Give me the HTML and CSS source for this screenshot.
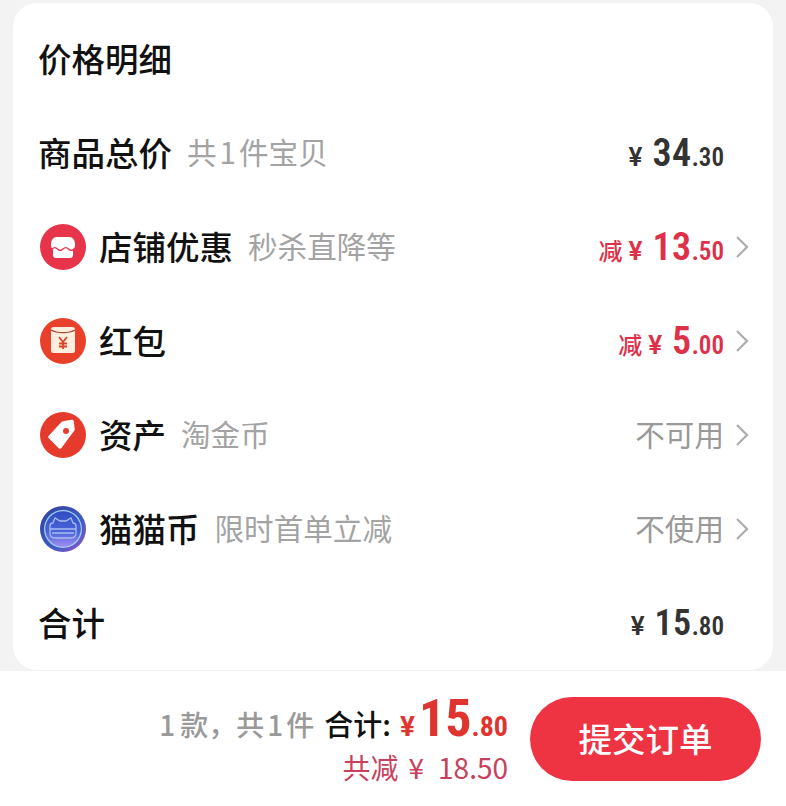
FILE: index.html
```html
<!DOCTYPE html>
<html lang="zh-CN">
<head>
    <meta charset="UTF-8">
    <meta name="viewport" content="width=device-width, initial-scale=1.0">
    <title>价格明细</title>
    <link rel="stylesheet" href="styles.css">
</head>
<body>
    <div class="card">
        <h1 class="title">价格明细</h1>

        <div class="row">
            <span class="name">商品总价</span>
            <span class="note">共<span class="one">1</span>件宝贝</span>
            <span class="amount"><span class="yen">¥</span><span class="big">34</span><span class="small">.30</span></span>
            <span class="arrow"></span>
        </div>

        <div class="row">
            <svg class="icon" viewBox="0 0 46 46">
                <circle cx="23" cy="23" r="23" fill="#e8344a"/>
                <path d="M11 21c0-5 2-8 6-8h12c4 0 6 3 6 8 0 2-.5 3-2 4v6c0 2-1 3-3 3H16c-2 0-3-1-3-3v-6c-1.500-1-2-2-2-4z" fill="#fff"/>
                <path d="M12 25c2-2 3.500-2 5.500 0s3.500 2 5.500 0 3.500-2 5.500 0 3.500 2 5.500 0" fill="none" stroke="#e8344a" stroke-width="1.400"/>
            </svg>
            <span class="name">店铺优惠</span>
            <span class="note">秒杀直降等</span>
            <span class="amount red"><span class="cut">减</span><span class="yen">¥</span><span class="big">13</span><span class="small">.50</span></span>
            <svg class="arrow" viewBox="0 0 14 24"><path d="M2 2l10 10L2 22" fill="none" stroke="#adadad" stroke-width="2.200"/></svg>
        </div>

        <div class="row">
            <svg class="icon" viewBox="0 0 46 46">
                <circle cx="23" cy="23" r="23" fill="#e8402a"/>
                <rect x="11" y="9" width="24" height="26" rx="2.500" fill="#fdeedd"/>
                <path d="M11 12c6 3.500 18 3.500 24 0" fill="none" stroke="#a8442c" stroke-width="1.200"/>
                <path d="M19 19l4 5 4-5M23 24v7M19 25.500h8M19 28.500h8" fill="none" stroke="#d8452a" stroke-width="1.800"/>
            </svg>
            <span class="name">红包</span>
            <span class="amount red"><span class="cut">减</span><span class="yen">¥</span><span class="big">5</span><span class="small">.00</span></span>
            <svg class="arrow" viewBox="0 0 14 24"><path d="M2 2l10 10L2 22" fill="none" stroke="#adadad" stroke-width="2.200"/></svg>
        </div>

        <div class="row">
            <svg class="icon" viewBox="0 0 46 46">
                <circle cx="23" cy="23" r="23" fill="#e63a2c"/>
                <path d="M10 25L23 11l9-1.500 1 8L20 35z" fill="#fff" stroke="#fff" stroke-width="3.500" stroke-linejoin="round"/>
                <circle cx="26" cy="19" r="3" fill="#e63a2c"/>
            </svg>
            <span class="name">资产</span>
            <span class="note">淘金币</span>
            <span class="status">不可用</span>
            <svg class="arrow" viewBox="0 0 14 24"><path d="M2 2l10 10L2 22" fill="none" stroke="#adadad" stroke-width="2.200"/></svg>
        </div>

        <div class="row">
            <svg class="icon" viewBox="0 0 46 46">
                <defs>
                    <linearGradient id="coinRing" x1="0" y1="0" x2="1" y2="1">
                        <stop offset="0" stop-color="#33409c"/>
                        <stop offset="0.6" stop-color="#3f5cc4"/>
                        <stop offset="1" stop-color="#9a52c8"/>
                    </linearGradient>
                    <linearGradient id="coinFill" x1="0" y1="0" x2="0" y2="1">
                        <stop offset="0" stop-color="#2f4cc0"/>
                        <stop offset="0.6" stop-color="#4c66da"/>
                        <stop offset="1" stop-color="#a28cf0"/>
                    </linearGradient>
                </defs>
                <circle cx="23" cy="23" r="23" fill="url(#coinRing)"/>
                <circle cx="23" cy="23" r="19" fill="#9fd4f5"/>
                <circle cx="23" cy="23" r="17.800" fill="url(#coinFill)"/>
                <path d="M10 20c0-2 1.500-3 3-3l2-5 5 3h6l5-3 2 5c1.500 0 3 1 3 3v7c0 3-2 5-5 5H15c-3 0-5-2-5-5z" fill="none" stroke="#a9bcf2" stroke-width="1.300"/>
                <path d="M10 23h26M12 27h22" stroke="#a9bcf2" stroke-width="1.300"/>
            </svg>
            <span class="name">猫猫币</span>
            <span class="note">限时首单立减</span>
            <span class="status">不使用</span>
            <svg class="arrow" viewBox="0 0 14 24"><path d="M2 2l10 10L2 22" fill="none" stroke="#adadad" stroke-width="2.200"/></svg>
        </div>

        <div class="row">
            <span class="name">合计</span>
            <span class="amount"><span class="yen">¥</span><span class="big total">15</span><span class="small">.80</span></span>
            <span class="arrow"></span>
        </div>
    </div>

    <div class="footer">
        <div class="summary">
            <div class="summary-line">
                <span class="count"><span class="one-first">1</span>款，共<span class="one">1</span>件</span>
                <span class="sum-label">合计:</span>
                <span class="sum-yen">¥</span><span class="sum-big">15</span><span class="sum-small">.80</span>
            </div>
            <div class="saved">共减<span class="saved-yen">¥</span>18.50</div>
        </div>
        <button class="submit" type="button">提交订单</button>
    </div>
</body>
</html>
```

FILE: styles.css
```css
body {
    margin: 0;
    background: #f3f3f3;
    font-family: "Noto Sans CJK SC", "Noto Sans", sans-serif;
    color: #111;
    padding-top: 3px;
}
.card {
    margin: 0 13px;
    height: 667px;
    box-sizing: border-box;
    padding: 0 24px 0 25px;
    background: #fff;
    border-radius: 24px;
}
.title {
    margin: 0;
    height: 103px;
    line-height: 110px;
    font-size: 33.500px;
    font-weight: 500;
}
.row {
    display: flex;
    align-items: center;
    height: 94px;
}
.icon {
    width: 46px;
    height: 46px;
    margin: 0 13px 0 2px;
    flex: none;
}
.name {
    margin-bottom: 4px;
    font-size: 33.500px;
    font-weight: 500;
}
.note {
    margin: 0 0 4px 15px;
    font-size: 29.600px;
    color: #a3a3a3;
}
.one {
    margin: 0 3px;
}
.amount {
    margin-left: auto;
    display: flex;
    align-items: baseline;
    font-family: Roboto, sans-serif;
    font-stretch: 82%;
    font-weight: 600;
    color: #333;
}
.amount.red {
    color: #de3049;
}
.cut {
    font-family: "Noto Sans CJK SC", sans-serif;
    font-size: 24px;
    font-weight: 500;
    margin-right: 6px;
}
.yen {
    font-size: 26px;
    font-stretch: 100%;
    margin-right: 10px;
}
.big {
    font-size: 38px;
    letter-spacing: 0.5px;
}
.big.total {
    font-size: 36px;
}
.small {
    font-size: 25px;
}
.status {
    margin: 0 0 4px auto;
    font-size: 29.600px;
    color: #999;
}
.arrow {
    width: 14px;
    height: 24px;
    margin-left: 11px;
    flex: none;
}
.footer {
    margin-top: 1px;
    height: 135px;
    box-sizing: border-box;
    padding: 26px 25px 0 0;
    background: #fff;
    display: flex;
    justify-content: flex-end;
    align-items: flex-start;
}
.summary {
    margin-right: 22px;
    text-align: right;
}
.summary-line {
    display: flex;
    align-items: baseline;
    justify-content: flex-end;
    height: 44px;
    line-height: 44px;
}
.count {
    font-size: 28px;
    font-weight: 500;
    color: #999;
    margin-right: 10px;
}
.one-first {
    margin-right: 5px;
}
.sum-label {
    font-size: 29px;
    font-weight: 500;
    margin-right: 9px;
}
.sum-yen, .sum-big, .sum-small {
    font-family: Roboto, sans-serif;
    font-stretch: 78%;
    font-weight: 700;
    color: #e0352f;
}
.sum-yen {
    font-size: 28px;
    font-stretch: 100%;
    margin-right: 4px;
}
.sum-big {
    font-size: 52px;
}
.sum-small {
    font-size: 28px;
}
.saved {
    margin-top: 8px;
    font-size: 28px;
    line-height: 36px;
    color: #c9405c;
}
.saved-yen {
    margin: 0 14px 0 10px;
}
.submit {
    width: 231px;
    height: 84px;
    padding: 0 0 4px;
    border: none;
    border-radius: 42px;
    background: #ee3342;
    color: #fff;
    font-family: inherit;
    font-size: 33.500px;
    font-weight: 500;
}
```
